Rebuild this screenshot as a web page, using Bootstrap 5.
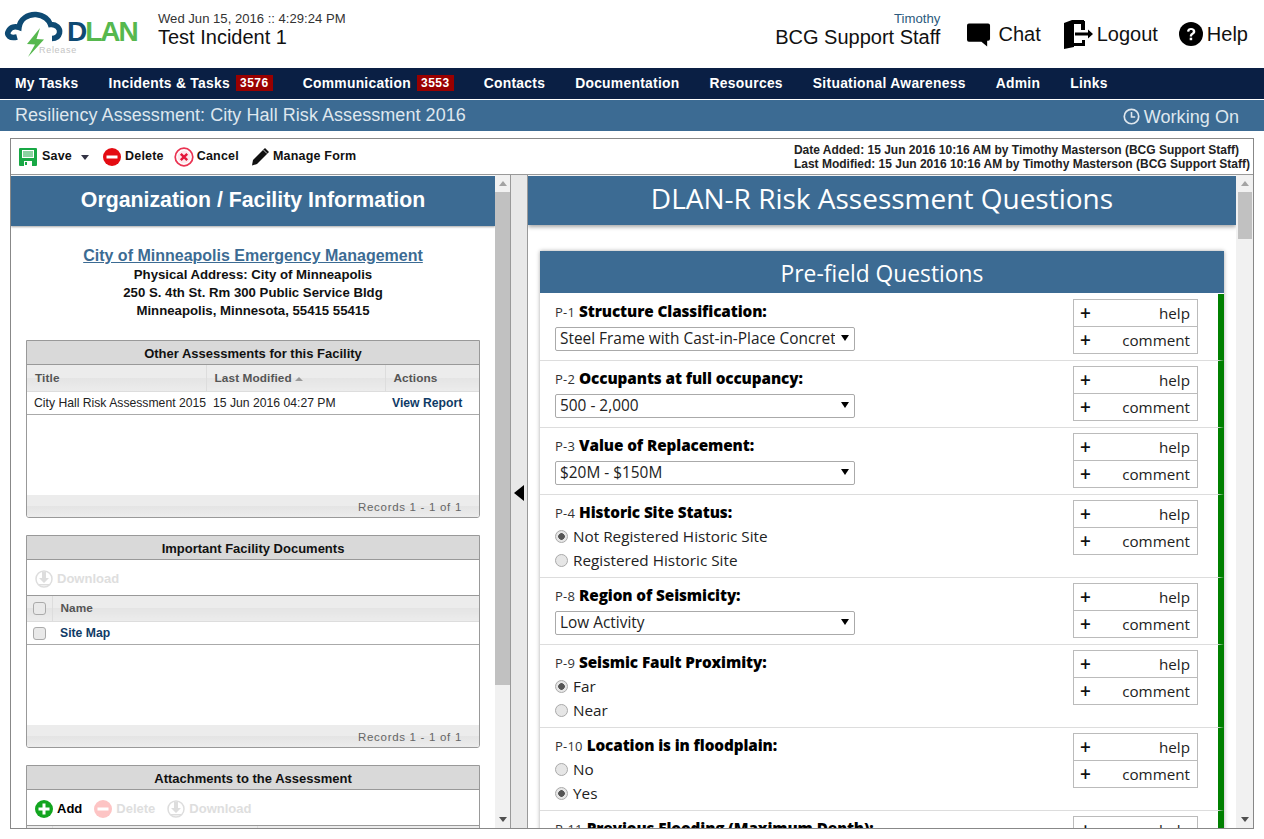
<!DOCTYPE html>
<html lang="en"><head><meta charset="utf-8"><title>DLAN</title>
<link rel="stylesheet" href="https://cdn.jsdelivr.net/npm/bootstrap@5.3.0/dist/css/bootstrap.min.css">
<style>
html,body{height:839px;overflow:hidden;background:#fff}
body{font-family:"Liberation Sans",Arial,sans-serif;color:#000;font-size:14px}
.hdr{height:68px;padding-right:16px}
.logo-box{position:relative;width:158px;height:68px;flex:none}
.logo-word{position:absolute;left:67px;top:14px;font-size:28px;font-weight:700;letter-spacing:-2px;line-height:36px;color:#56b84e}
.logo-word b{color:#0e4a73}
.logo-rel{position:absolute;left:39px;top:44px;font-size:9px;line-height:12px;letter-spacing:.7px;color:#c4c4c4}
.hcol{padding-top:12px}
.dt{font-size:13.1px;line-height:14px;color:#333}
.t20{font-size:20px;line-height:24px;color:#111;margin-top:-1px}
.who{font-size:13.2px;line-height:14px;color:#2b5a7d}
.act{font-size:20px;color:#111}
.mainnav{height:31px;background:#0a1f44;padding:0;margin-bottom:1px}
.mainnav a{color:#fff;font-weight:700;font-size:13.85px;letter-spacing:.28px;padding:0 15px 1px;line-height:30px;text-decoration:none;display:flex;align-items:center}
.cnt{background:#900;color:#fff;font-size:12px;letter-spacing:.5px;line-height:16px;padding:0 4px;margin-left:6px;height:16px;border-radius:0;font-weight:700}
.subbar{height:31px;background:#3c6b93;color:#dfe7ee;font-size:18px;letter-spacing:.05px;line-height:30px;padding:0 25px 0 15px;margin-bottom:7px}
.frame{width:1244px;height:691px;margin-left:10px;border:1px solid #888;display:flex;flex-direction:column}
.tbar{height:36px;border-bottom:1px solid #999;padding:0 3px 0 8px;flex:none}
.tb{font-weight:700;font-size:12.5px;letter-spacing:.2px;color:#111;display:flex;align-items:center}
.meta{font-weight:700;font-size:12px;line-height:14px;color:#222;white-space:nowrap}
.panes{flex:1;min-height:0;display:flex}
.pane-l{width:484px;flex:none;overflow:hidden}
.pane-r{flex:1;overflow:hidden;min-width:0}
.sb{width:17px;flex:none;background:#f1f1f1;display:flex;flex-direction:column;align-items:center;height:100%}
.sb-l{width:16px;border-right:1px solid #999}
.sb-up{width:0;height:0;border:4px solid transparent;border-top:0;border-bottom:5px solid #a3a3a3;margin-top:6px}
.sb-dn{width:0;height:0;border:4px solid transparent;border-bottom:0;border-top:5px solid #505050;margin-top:auto;margin-bottom:6px}
.sb-th{width:15px;background:#c1c1c1;margin-top:6px}
.sb-l .sb-th{height:493px}
.sb-r .sb-th{height:47px;width:14px}
.split{width:17px;flex:none;background:#e8e8e8;border-right:1px solid #999}
.tri{width:0;height:0;border:8px solid transparent;border-left:0;border-right:10px solid #000;margin-bottom:18px}
.bluehead{background:#3c6b93;color:#fff;text-align:center}
.lh{height:50px;font-size:21.3px;font-weight:700;line-height:48px;margin-top:1px;box-shadow:0 1px 2px rgba(0,0,0,.35)}
.org{margin-top:20px;text-align:center;font-weight:700;font-size:13.2px;line-height:18px;color:#111}
.org a{color:#3c6b93;font-size:16px;line-height:20px;display:block}
.grid-box{margin:0 15px 17px;border:1px solid #999;border-radius:0 0 3px 3px;overflow:hidden}
.grid-t{height:24px;background:#d9d9d9;border-bottom:1px solid #999;text-align:center;font-weight:700;font-size:13px;line-height:26px;color:#111}
.grid-tools{height:36px;border-bottom:1px solid #999;padding:3px 8px 0;font-weight:700;font-size:13px}
.dis{color:#dedede}
.tbl{--bs-table-bg:transparent;margin:0;table-layout:fixed;font-size:12.2px;width:100%}
.tbl th{background:linear-gradient(#ececec 50%,#e4e4e4 50%,#ececec);color:#555;font-weight:700;font-size:11.8px;height:26px;padding:0 8px;border-bottom:1px solid #ddd;border-right:1px solid #ddd;line-height:22px;vertical-align:middle;letter-spacing:.1px}
.tbl th:last-child{border-right:0}
.tbl td{height:23px;padding:0 7px;color:#222;border-bottom:1px solid #aaa;vertical-align:middle;white-space:nowrap;line-height:22px}
.tbl td a{color:#0f3b66;font-weight:700;text-decoration:none}
.grid-empty{background:#fff}
.grid-f{height:22px;background:linear-gradient(#ececec 50%,#e4e4e4 50%,#ececec);text-align:right;color:#666;font-size:11.5px;letter-spacing:.7px;line-height:24px;padding-right:17px}
.ck{width:13px;height:13px;margin:0;border:1px solid #aaa;border-radius:2px;background:#e9e9e9;vertical-align:middle;display:block}
.rh{height:49px;font-family:"Open Sans",sans-serif;font-size:28px;line-height:44px;margin-top:1px;box-shadow:0 2px 4px rgba(0,0,0,.35)}
.qpanel{margin:26px 12px 0;box-shadow:0 0 4px rgba(0,0,0,.35);font-family:"Open Sans",sans-serif}
.qh{height:42px;font-size:22.8px;line-height:45px}
.qlist{padding-top:1px}
.list-group-flush>.qrow{padding:5px 20px 5px 15px;border-width:0 6px 1px 0;border-style:solid;border-color:#ddd green #ddd #fff;border-radius:0;color:#111;display:flex;justify-content:space-between}
.qlab{font-size:15.3px;line-height:24px;height:24px;white-space:nowrap}
.qlab small{font-size:13px;color:#333;letter-spacing:.2px}
.qlab b{font-weight:800;letter-spacing:-.1px;color:#000}
.sel{width:300px;height:24px;margin:4px 0 4px;padding:0 19px 0 4px;border:1px solid #aaa;border-radius:2px;font-size:15.4px;line-height:22px;color:#222;font-family:inherit;background-size:8px 6px;background-position:right 5px top 7px;background-image:url("data:image/svg+xml,%3Csvg xmlns='http://www.w3.org/2000/svg' viewBox='0 0 8 6'%3E%3Cpath d='M0 0h8L4 6z'/%3E%3C/svg%3E")}
.rad{display:flex;align-items:center;height:24px;font-size:15.3px;color:#222}
.rad input{width:13px;height:13px;margin:0 5px 0 0;border:1px solid #aaa;background:#e6e6e6;flex:none}
.rad input:checked{background:radial-gradient(circle,#555 0 3px,#e6e6e6 3.6px);border-color:#aaa}
.hbox{width:125px;height:55px;flex:none;border:1px solid #bbb;font-size:15.2px}
.hbox div{height:26px;display:flex;justify-content:space-between;align-items:center;padding:0 7px 0 6px;color:#222}
.hbox div+div{border-top:1px solid #bbb;height:27px}
.hbox span:first-child{font-size:19px;color:#111;line-height:1;font-weight:600}
</style></head>
<body>
<header class="hdr d-flex">
 <div class="logo-box">
  <svg width="70" height="68" viewBox="0 0 70 68"><path d="M17 37C10 39 6 35 8.500 31C10.500 27 15 26 19 27.500C20 19 28 14 36 14.500C44 15 49 20 50.500 24.500C56 24 60.500 28 59.500 33C58.500 37 55 38.500 52 38.500" fill="none" stroke="#0e4a73" stroke-width="5.500"/><path d="M40 28L27 44L35 44.500L28 57L44 39.500L36.500 39Z" fill="#56b84e"/></svg>
  <div class="logo-word"><b>D</b>LAN</div>
  <div class="logo-rel">Release</div>
 </div>
 <div class="hcol">
  <div class="dt">Wed Jun 15, 2016 :: 4:29:24 PM</div>
  <div class="t20">Test Incident 1</div>
 </div>
 <div class="hcol ms-auto text-end" style="margin-right:27px">
  <div class="who">Timothy</div>
  <div class="t20">BCG Support Staff</div>
 </div>
 <div class="d-flex act align-items-center">
  <svg width="24" height="25" viewBox="0 0 25 25" style="margin-right:7px"><path d="M2 1H22Q24 1 24 3V17Q24 19 22 19H21V25L15 20H2Q0 20 0 18V3Q0 1 2 1Z"/></svg><span style="margin-right:22px">Chat</span>
  <svg width="31" height="31" viewBox="0 0 31 31" style="margin-right:3px"><path d="M1 4L9 1H21V11H18V4H11V28L1 30Z" fill="#000"/><path d="M11 2H22V11H19V5H11ZM11 21H22V27H11V24H19V21Z" fill="#000"/><path d="M12 13.500H25V10.500L30 15L25 19.500V16.500H12Z" fill="#000"/></svg><span style="margin-right:21px">Logout</span>
  <svg width="24" height="24" viewBox="0 0 24 24" style="margin-right:4px"><circle cx="12" cy="12" r="12"/><path d="M8 9.500C8 7 10 6 12 6C14.500 6 16.300 7.300 16.300 9.500C16.300 12.500 13 12.200 13 14.500H10.800C10.800 11 13.800 11.300 13.800 9.500C13.800 8.600 13 8.100 12 8.100C11 8.100 10.300 8.700 10.300 9.800Z" fill="#fff"/><rect x="10.700" y="15.700" width="2.500" height="2.500" fill="#fff"/></svg><span>Help</span>
 </div>
</header>
<nav class="mainnav navbar d-flex justify-content-start">
 <a href="#">My Tasks</a>
 <a href="#">Incidents &amp; Tasks<span class="cnt">3576</span></a>
 <a href="#">Communication<span class="cnt">3553</span></a>
 <a href="#">Contacts</a><a href="#">Documentation</a><a href="#">Resources</a><a href="#">Situational Awareness</a><a href="#">Admin</a><a href="#">Links</a>
</nav>
<div class="subbar d-flex justify-content-between">
 <div>Resiliency Assessment: City Hall Risk Assessment 2016</div>
 <div class="d-flex align-items-center" style="padding-top:2px"><svg width="17" height="17" viewBox="0 0 16 16" style="margin-right:4px"><circle cx="8" cy="8" r="6.800" fill="none" stroke="#dfe7ee" stroke-width="1.600"/><path d="M8 3.800V8.500H11.500" fill="none" stroke="#dfe7ee" stroke-width="1.500"/></svg><span>Working On</span></div>
</div>
<main class="frame">
 <div class="tbar d-flex align-items-center">
  <div class="tb"><svg width="18" height="18" viewBox="0 0 18 18" style="margin-right:5px"><path d="M1 0H17Q18 0 18 1V17Q18 18 17 18H1Q0 18 0 17V1Q0 0 1 0Z" fill="#18a845"/><rect x="3" y="2" width="12" height="8" fill="#fff"/><path d="M4 4H14M4 6H14M4 8H14" stroke="#18a845"/><rect x="5" y="13" width="8" height="5" fill="#fff"/><rect x="6" y="14" width="2" height="3" fill="#18a845"/></svg>Save<svg width="8" height="5" viewBox="0 0 8 5" style="margin:2px 14px 0 9px"><path d="M0 0H8L4 5Z" fill="#334"/></svg></div>
  <div class="tb"><svg width="18" height="18" viewBox="0 0 18 18" style="margin-right:4px"><circle cx="9" cy="9" r="9" fill="#e40b12"/><rect x="3.500" y="7.500" width="11" height="3" fill="#fff"/></svg>Delete</div>
  <div class="tb" style="margin-left:10px"><svg width="20" height="20" viewBox="0 0 20 20" style="margin-right:3px"><circle cx="10" cy="10" r="8.800" fill="#fff" stroke="#ea3352" stroke-width="1.700"/><circle cx="10" cy="10" r="6.500" fill="#fde8ec"/><path d="M6.800 6.800L13.200 13.200M13.200 6.800L6.800 13.200" stroke="#e4173a" stroke-width="2.400"/></svg>Cancel</div>
  <div class="tb" style="margin-left:12px"><svg width="19" height="19" viewBox="0 0 19 19" style="margin-right:3px"><path d="M14 1L18 5L6 17L1 18.500L2 13Z" fill="#111"/><path d="M12.500 3L16 6.500" stroke="#fff" stroke-width=".8"/></svg>Manage Form</div>
  <div class="meta ms-auto"><div>Date Added: 15 Jun 2016 10:16 AM by Timothy Masterson (BCG Support Staff)</div><div>Last Modified: 15 Jun 2016 10:16 AM by Timothy Masterson (BCG Support Staff)</div></div>
 </div>
 <div class="panes">
  <section class="pane-l">
   <div class="bluehead lh">Organization / Facility Information</div>
   <div class="org"><a href="#">City of Minneapolis Emergency Management</a>
    <div>Physical Address: City of Minneapolis</div><div>250 S. 4th St. Rm 300 Public Service Bldg</div><div>Minneapolis, Minnesota, 55415 55415</div></div>
   <div class="grid-box" style="margin-top:20px">
    <div class="grid-t">Other Assessments for this Facility</div>
    <table class="table tbl"><colgroup><col style="width:179px"><col style="width:179px"><col></colgroup>
     <thead><tr><th>Title</th><th>Last Modified <svg width="8" height="4" viewBox="0 0 8 4" class="align-middle"><path d="M0 4H8L4 0Z" fill="#999"/></svg></th><th>Actions</th></tr></thead>
     <tbody><tr><td>City Hall Risk Assessment 2015</td><td>15 Jun 2016 04:27 PM</td><td><a href="#">View Report</a></td></tr></tbody></table>
    <div class="grid-empty" style="height:80px"></div>
    <div class="grid-f">Records 1 - 1 of 1</div>
   </div>
   <div class="grid-box">
    <div class="grid-t">Important Facility Documents</div>
    <div class="grid-tools d-flex align-items-center dis"><svg width="18" height="18" viewBox="0 0 18 18" style="margin-right:4px"><circle cx="9" cy="9" r="8" fill="none" stroke="#ddd" stroke-width="1.500"/><path d="M7 2H11V8H14L9 13L4 8H7ZM4 14H14V15.500H4Z" fill="#ddd"/></svg>Download</div>
    <table class="table tbl"><colgroup><col style="width:25px"><col></colgroup>
     <thead><tr><th class="px-1"><input type="checkbox" class="ck mx-auto form-check-input"></th><th>Name</th></tr></thead>
     <tbody><tr><td class="px-1"><input type="checkbox" class="ck mx-auto form-check-input"></td><td class="px-2"><a href="#">Site Map</a></td></tr></tbody></table>
    <div class="grid-empty" style="height:80px"></div>
    <div class="grid-f">Records 1 - 1 of 1</div>
   </div>
   <div class="grid-box">
    <div class="grid-t">Attachments to the Assessment</div>
    <div class="grid-tools d-flex align-items-center"><svg width="18" height="18" viewBox="0 0 18 18" style="margin-right:4px"><circle cx="9" cy="9" r="9" fill="#12a51f"/><path d="M7.500 3.500H10.500V7.500H14.500V10.500H10.500V14.500H7.500V10.500H3.500V7.500H7.500Z" fill="#fff"/></svg>Add
     <svg width="18" height="18" viewBox="0 0 18 18" style="margin:0 4px 0 12px"><circle cx="9" cy="9" r="9" fill="#fdc4c4"/><rect x="3.500" y="7.500" width="11" height="3" fill="#fff"/></svg><span class="dis">Delete</span>
     <svg width="18" height="18" viewBox="0 0 18 18" style="margin:0 4px 0 12px"><circle cx="9" cy="9" r="8" fill="none" stroke="#ddd" stroke-width="1.500"/><path d="M7 2H11V8H14L9 13L4 8H7ZM4 14H14V15.500H4Z" fill="#ddd"/></svg><span class="dis">Download</span></div>
    <table class="table tbl"><colgroup><col style="width:25px"><col style="width:205px"><col></colgroup><thead><tr><th></th><th></th><th></th></tr></thead></table>
   </div>
  </section>
  <div class="sb sb-l"><div class="sb-up"></div><div class="sb-th"></div><div class="sb-dn"></div></div>
  <div class="split d-flex align-items-center justify-content-center"><div class="tri"></div></div>
  <section class="pane-r">
   <div class="bluehead rh">DLAN-R Risk Assessment Questions</div>
   <div class="qpanel">
    <div class="bluehead qh">Pre-field Questions</div>
    <div class="list-group list-group-flush qlist">
     <div class="list-group-item qrow"><div><div class="qlab"><small>P-1</small> <b>Structure Classification:</b></div><select class="form-select sel"><option>Steel Frame with Cast-in-Place Concrete Floors</option></select></div><div class="hbox"><div><span>+</span><span>help</span></div><div><span>+</span><span>comment</span></div></div></div>
     <div class="list-group-item qrow"><div><div class="qlab"><small>P-2</small> <b>Occupants at full occupancy:</b></div><select class="form-select sel"><option>500 - 2,000</option></select></div><div class="hbox"><div><span>+</span><span>help</span></div><div><span>+</span><span>comment</span></div></div></div>
     <div class="list-group-item qrow"><div><div class="qlab"><small>P-3</small> <b>Value of Replacement:</b></div><select class="form-select sel"><option>$20M - $150M</option></select></div><div class="hbox"><div><span>+</span><span>help</span></div><div><span>+</span><span>comment</span></div></div></div>
     <div class="list-group-item qrow"><div><div class="qlab"><small>P-4</small> <b>Historic Site Status:</b></div><label class="rad"><input type="radio" class="form-check-input" name="p4" checked>Not Registered Historic Site</label><label class="rad"><input type="radio" class="form-check-input" name="p4">Registered Historic Site</label></div><div class="hbox"><div><span>+</span><span>help</span></div><div><span>+</span><span>comment</span></div></div></div>
     <div class="list-group-item qrow"><div><div class="qlab"><small>P-8</small> <b>Region of Seismicity:</b></div><select class="form-select sel"><option>Low Activity</option></select></div><div class="hbox"><div><span>+</span><span>help</span></div><div><span>+</span><span>comment</span></div></div></div>
     <div class="list-group-item qrow"><div><div class="qlab"><small>P-9</small> <b>Seismic Fault Proximity:</b></div><label class="rad"><input type="radio" class="form-check-input" name="p9" checked>Far</label><label class="rad"><input type="radio" class="form-check-input" name="p9">Near</label></div><div class="hbox"><div><span>+</span><span>help</span></div><div><span>+</span><span>comment</span></div></div></div>
     <div class="list-group-item qrow"><div><div class="qlab"><small>P-10</small> <b>Location is in floodplain:</b></div><label class="rad"><input type="radio" class="form-check-input" name="p10">No</label><label class="rad"><input type="radio" class="form-check-input" name="p10" checked>Yes</label></div><div class="hbox"><div><span>+</span><span>help</span></div><div><span>+</span><span>comment</span></div></div></div>
     <div class="list-group-item qrow"><div><div class="qlab"><small>P-11</small> <b>Previous Flooding (Maximum Depth):</b></div></div><div class="hbox"><div><span>+</span><span>help</span></div><div><span>+</span><span>comment</span></div></div></div>
    </div>
   </div>
  </section>
  <div class="sb sb-r"><div class="sb-up"></div><div class="sb-th"></div><div class="sb-dn"></div></div>
 </div>
</main>
<script src="https://cdn.jsdelivr.net/npm/bootstrap@5.3.0/dist/js/bootstrap.bundle.min.js"></script>
</body></html>
